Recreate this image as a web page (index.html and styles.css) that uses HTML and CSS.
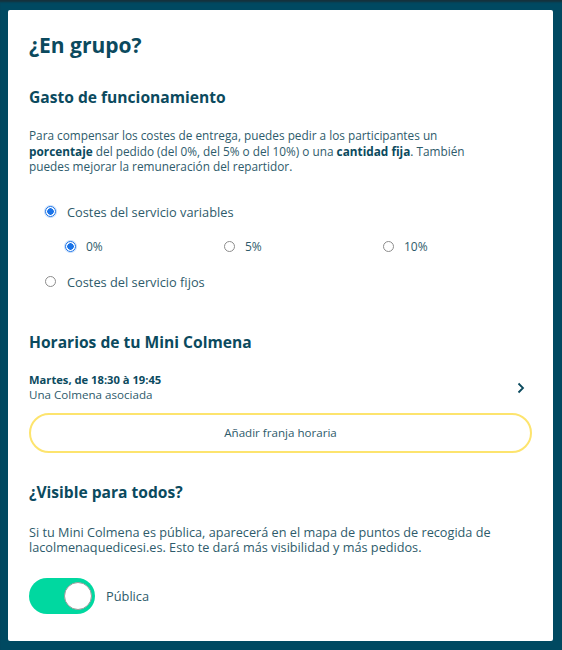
FILE: index.html
```html
<!DOCTYPE html>
<html lang="es">
<head>
<meta charset="utf-8">
<link rel="stylesheet" href="styles.css">
</head>
<body>
<div class="card">
  <h1 class="title">¿En grupo?</h1>

  <h2 class="section-title first">Gasto de funcionamiento</h2>
  <p class="text">Para compensar los costes de entrega, puedes pedir a los participantes un <b>porcentaje</b> del pedido (del 0%, del 5% o del 10%) o una <b>cantidad fija</b>. También puedes mejorar la remuneración del repartidor.</p>

  <div class="radios">
    <label class="radio-row"><span class="radio on"></span><span>Costes del servicio variables</span></label>
    <div class="sub-radios">
      <label class="radio-row"><span class="radio on"></span><span>0%</span></label>
      <label class="radio-row"><span class="radio"></span><span>5%</span></label>
      <label class="radio-row"><span class="radio"></span><span>10%</span></label>
    </div>
    <label class="radio-row"><span class="radio"></span><span>Costes del servicio fijos</span></label>
  </div>

  <h2 class="section-title hours">Horarios de tu Mini Colmena</h2>
  <div class="slot">
    <div class="slot-info">
      <div class="slot-time">Martes, de 18:30 à 19:45</div>
      <div class="slot-sub">Una Colmena asociada</div>
    </div>
    <svg class="chevron" width="8" height="12" viewBox="0 0 8 12"><path d="M1.5 1.5 L6 6 L1.5 10.5" fill="none" stroke="#0b4a5e" stroke-width="1.8"/></svg>
  </div>
  <button class="add-btn">Añadir franja horaria</button>

  <h2 class="section-title vis">¿Visible para todos?</h2>
  <p class="text wide">Si tu Mini Colmena es pública, aparecerá en el mapa de puntos de recogida de lacolmenaquedicesi.es. Esto te dará más visibilidad y más pedidos.</p>

  <div class="toggle-row">
    <span class="toggle"><span class="knob"></span></span>
    <span class="toggle-label">Pública</span>
  </div>
</div>
</body>
</html>
```

FILE: styles.css
```css
html, body {
  margin: 0;
  padding: 0;
}
body {
  background: #004961;
  font-family: "Open Sans", "Noto Sans", sans-serif;
  color: #2e5b6b;
  width: 562px;
  height: 650px;
  overflow: hidden;
  box-shadow: inset 0 3px 2px -1px #16323c;
}
.card {
  margin: 10px 0 0 8px;
  width: 545px;
  height: 631px;
  box-sizing: border-box;
  background: #fff;
  border-radius: 2px;
  padding: 22px 21px 0 21px;
}
.title {
  margin: 0;
  font-size: 21px;
  line-height: 26px;
  font-weight: 700;
  color: #0b4a5e;
}
.section-title {
  margin: 30px 0 0 0;
  font-size: 15.6px;
  line-height: 22px;
  font-weight: 700;
  color: #0b4a5e;
}
.section-title.first {
  margin-top: 28px;
}
.text {
  margin: 20px 0 0 0;
  max-width: 465px;
  font-size: 11.8px;
  line-height: 15.6px;
}
.text.wide {
  margin-top: 22px;
  font-size: 12.7px;
  max-width: 480px;
}
.text b {
  color: #0b4a5e;
}
.radios {
  margin-top: 29px;
  padding-left: 16px;
  display: flex;
  flex-direction: column;
  gap: 19px;
  font-size: 12.8px;
}
.radio-row {
  display: flex;
  align-items: center;
  gap: 11px;
  line-height: 16px;
}
.sub-radios {
  display: grid;
  grid-template-columns: 159px 159px 1fr;
  padding-left: 20px;
  font-size: 12px;
}
.sub-radios .radio-row {
  gap: 10px;
}
.radio {
  width: 9px;
  height: 9px;
  border-radius: 50%;
  border: 1px solid #8c8c8c;
  box-sizing: content-box;
  background: #fff;
}
.radio.on {
  border-color: #1a73e8;
  background: radial-gradient(circle, #1a73e8 0 3px, #fff 3.5px);
  box-shadow: 0 0 0 1px rgba(26,115,232,0.25);
}
.section-title.hours {
  margin-top: 41px;
}
.slot {
  margin-top: 19px;
  display: flex;
  align-items: center;
  justify-content: space-between;
  padding-right: 7px;
}
.slot-time {
  font-size: 11.2px;
  font-weight: 700;
  line-height: 15px;
  color: #0b4a5e;
}
.slot-sub {
  font-size: 11.6px;
  line-height: 15px;
}
.chevron {
  margin-top: 2px;
}
.add-btn {
  display: block;
  margin-top: 11px;
  width: 100%;
  height: 40px;
  border: 2px solid #fde46e;
  border-radius: 20px;
  background: #fff;
  font-family: inherit;
  font-size: 11.6px;
  color: #2e5b6b;
}
.section-title.vis {
  margin-top: 28px;
}
.toggle-row {
  margin-top: 22px;
  display: flex;
  align-items: center;
  gap: 11px;
}
.toggle {
  width: 66px;
  height: 36px;
  border-radius: 18px;
  background: #00d8a0;
  display: flex;
  align-items: center;
  justify-content: flex-end;
  padding-right: 3px;
  box-sizing: border-box;
}
.knob {
  width: 28px;
  height: 28px;
  border-radius: 50%;
  background: #fff;
  border: 1px solid #9a9a9a;
  box-sizing: border-box;
}
.toggle-label {
  font-size: 12.8px;
}
```
